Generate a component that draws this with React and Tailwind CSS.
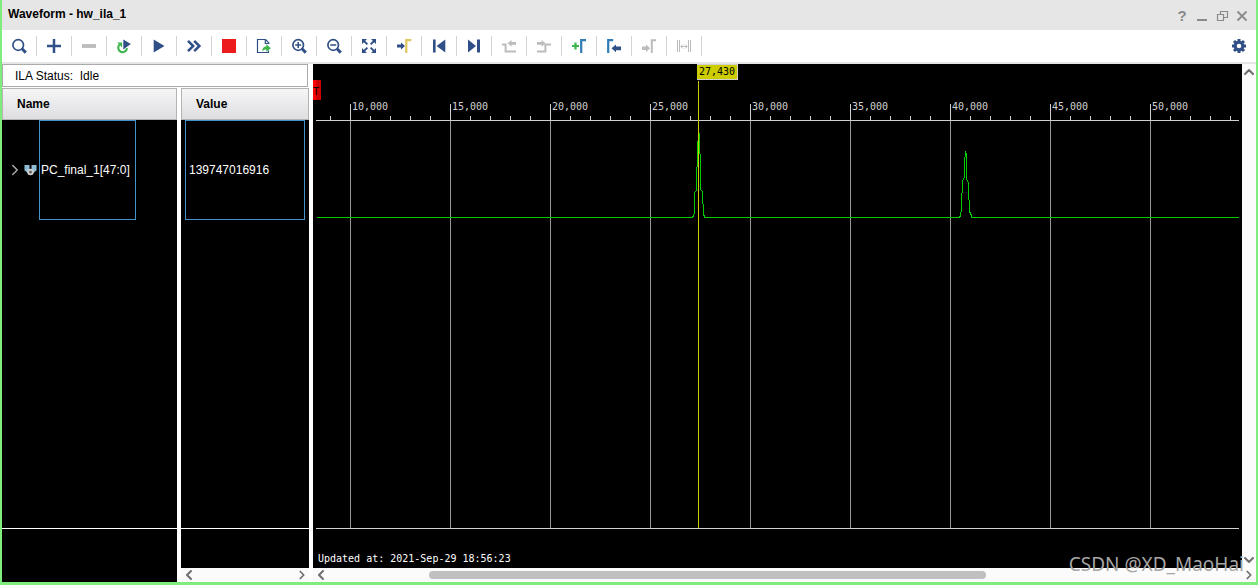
import { useLayoutEffect, useRef, useState } from 'react';
import clsx from 'clsx';
import { ChevronDown, ChevronLeft, ChevronRight, ChevronUp } from 'lucide-react';

const BLUE = '#2f4f86';
const SKY = '#2f7cb5';
const GREEN = '#3cb54a';
const GRAY = '#bcbcbc';

const TICK_STEP = 20;
const FIRST_TICK = 14;
const LABEL_WIDTH = 40;

// chart coordinates, origin is the top left of the plot
const TRACE = [
  [0, 153], [376, 153], [377, 151], [378, 148], [378, 128], [380, 126], [380, 103],
  [381, 102], [381, 77], [383, 76], [383, 68], [383, 89], [384, 90], [384, 125],
  [386, 127], [386, 139], [387, 140], [387, 149], [388, 153], [643, 153], [644, 151],
  [645, 144], [645, 129], [646, 128], [646, 117], [648, 112], [648, 93], [649, 92],
  [649, 87], [650, 91], [650, 115], [652, 118], [652, 135], [653, 136], [653, 147],
  [655, 151], [655, 153], [4000, 153],
];

function Icon({ children }) {
  return (
    <svg viewBox="0 0 16 16" className="w-4 h-4" fill="none" aria-hidden="true">
      {children}
    </svg>
  );
}

function Magnifier({ children }) {
  return (
    <Icon>
      <circle cx="7.2" cy="7" r="5.3" stroke={BLUE} strokeWidth="1.7" />
      <path d="M11 10.8l3.8 3.8" stroke={BLUE} strokeWidth="3" />
      {children}
    </Icon>
  );
}

const TOOLS = [
  { label: 'Search', icon: <Magnifier /> },
  { label: 'Add probes', icon: <Icon><path d="M1 8h14M8 1v14" stroke={BLUE} strokeWidth="2.5" /></Icon> },
  { label: 'Remove probes', disabled: true, icon: <Icon><path d="M1 8h14" stroke={GRAY} strokeWidth="3.8" /></Icon> },
  {
    label: 'Auto re-trigger',
    icon: (
      <Icon>
        <path d="M3.6 6.6A4.4 4.4 0 1 0 11 10.2" stroke={GREEN} strokeWidth="2.1" />
        <path d="M1.2 4.4h4.9v5z" fill={GREEN} />
        <path d="M7.3 1.4v10L14.8 6z" fill={BLUE} />
      </Icon>
    ),
  },
  { label: 'Run trigger', icon: <Icon><path d="M2.7 1.6v12.8L13.5 8z" fill={BLUE} /></Icon> },
  {
    label: 'Run trigger immediate',
    icon: <Icon><path d="M2 2.8L7.2 8 2 13.2M8.2 2.8L13.4 8l-5.2 5.2" stroke={BLUE} strokeWidth="2.5" /></Icon>,
  },
  { label: 'Stop trigger', icon: <Icon><path d="M1 1h14v14H1z" fill="#ed1c1c" /></Icon> },
  {
    label: 'Export data',
    icon: (
      <Icon>
        <path d="M13 5.2V6M9.5 1.5h-8v13h11v-2M9.5 1.5l3.5 3.6M9.3 1.5v4h3.9" stroke={BLUE} strokeWidth="1.2" />
        <path d="M6.3 13.6c0-3.6 1.4-5 4-5V6.3l4.6 3.9-4.6 3.6v-2.4c-2 0-3 .6-4 2.2z" fill={GREEN} />
      </Icon>
    ),
  },
  { label: 'Zoom in', icon: <Magnifier><path d="M4.2 7h6M7.2 4v6" stroke={BLUE} strokeWidth="1.5" /></Magnifier> },
  { label: 'Zoom out', icon: <Magnifier><path d="M4.2 7h6" stroke={BLUE} strokeWidth="1.5" /></Magnifier> },
  {
    label: 'Zoom fit',
    icon: (
      <Icon>
        <path d="M3 3l3.4 3.4M13 3L9.6 6.4M3 13l3.4-3.4M13 13L9.6 9.6" stroke={BLUE} strokeWidth="1.8" />
        <path d="M1 1h5L1 6zM15 1v5l-5-5zM1 15v-5l5 5zM15 15h-5l5-5z" fill={BLUE} />
      </Icon>
    ),
  },
  {
    label: 'Go to cursor',
    icon: (
      <Icon>
        <path d="M1 6.4h4V4.6L9 8 5 11.4V9.6H1z" fill={BLUE} />
        <path d="M10.3 15V2.2h5" stroke="#e0c75d" strokeWidth="2.2" />
      </Icon>
    ),
  },
  { label: 'Go to start', icon: <Icon><path d="M2 1.5h2.6v13H2zM14.3 1.5v13L5.6 8z" fill={BLUE} /></Icon> },
  { label: 'Go to end', icon: <Icon><path d="M2 1.5v13L10 8zM11 1.5h3v13h-3z" fill={BLUE} /></Icon> },
  {
    label: 'Previous transition',
    disabled: true,
    icon: (
      <Icon>
        <path d="M1 6.4h3.6v7H15" stroke={GRAY} strokeWidth="2" />
        <path d="M6.5 5.3L10.5 2v2H15v2.8h-4.5v1.9z" fill={GRAY} />
      </Icon>
    ),
  },
  {
    label: 'Next transition',
    disabled: true,
    icon: (
      <Icon>
        <path d="M1 13.4h8.4v-7H15" stroke={GRAY} strokeWidth="2" />
        <path d="M9.5 5.3L5.5 2v2H1v2.8h4.5v1.9z" fill={GRAY} />
      </Icon>
    ),
  },
  {
    label: 'Add marker',
    icon: (
      <Icon>
        <path d="M1 8h7M4.5 4.5v7" stroke={GREEN} strokeWidth="2.2" />
        <path d="M10.2 15V2.2H15" stroke={SKY} strokeWidth="2.2" />
      </Icon>
    ),
  },
  {
    label: 'Previous marker',
    icon: (
      <Icon>
        <path d="M2.2 15V2.2h5" stroke={SKY} strokeWidth="2.2" />
        <path d="M5.5 10.3L10 6.5v2h5v3.8h-5v2z" fill={BLUE} />
      </Icon>
    ),
  },
  {
    label: 'Next marker',
    disabled: true,
    icon: (
      <Icon>
        <path d="M1 8.6h4v-2l4 3.7-4 3.7v-2H1z" fill={GRAY} />
        <path d="M10.8 15V2.2H15" stroke={GRAY} strokeWidth="2" />
      </Icon>
    ),
  },
  {
    label: 'Swap cursors',
    disabled: true,
    icon: (
      <Icon>
        <path d="M1.5 2v12M3.5 2v12M12.5 2v12M14.5 2v12" stroke={GRAY} strokeWidth="1" />
        <path d="M5 8.5h6M6.8 6.5l-2 2 2 2M9.2 6.5l2 2-2 2" stroke={GRAY} strokeWidth="1" />
      </Icon>
    ),
  },
];

const WINDOW_BUTTONS = [
  { label: 'Help', icon: <span className="text-[15px] leading-4 font-bold">?</span> },
  { label: 'Minimize', icon: <Icon><path d="M3 12h10" stroke="currentColor" strokeWidth="2" /></Icon> },
  {
    label: 'Restore',
    icon: (
      <Icon>
        <path d="M6.5 6.5v-3h7v6h-4M3.5 6.5h6v6h-6z" stroke="currentColor" strokeWidth="1.2" />
      </Icon>
    ),
  },
  { label: 'Close', icon: <Icon><path d="M3.5 3.5l9 9M12.5 3.5l-9 9" stroke="currentColor" strokeWidth="1.8" /></Icon> },
];

function TitleBar() {
  return (
    <header className="flex h-[30px] shrink-0 justify-between bg-[#e6e6e6] px-1.5">
      <h1 className="text-xs leading-7 font-bold">Waveform - hw_ila_1</h1>
      <div className="flex items-center gap-1 pt-0.5 text-[#8a8a8a]">
        {WINDOW_BUTTONS.map(({ label, icon }) => (
          <button key={label} aria-label={label} className="flex w-4 h-4 items-center justify-center">
            {icon}
          </button>
        ))}
      </div>
    </header>
  );
}

function Toolbar() {
  return (
    <div className="flex h-[34px] shrink-0 items-center border-b-2 border-[#e6e6e6] bg-white pr-[9px]">
      {TOOLS.map(({ label, icon, disabled }) => (
        <button
          key={label}
          aria-label={label}
          disabled={disabled}
          className="flex w-[35px] h-5 items-center justify-center border-r border-[#d4d4d4]"
        >
          {icon}
        </button>
      ))}
      <button aria-label="Settings" className="ml-auto">
        <Icon>
          <path d="M8 1v14M1 8h14M3 3l10 10M13 3L3 13" stroke={BLUE} strokeWidth="3" />
          <circle cx="8" cy="8" r="3.8" fill="#fff" stroke={BLUE} strokeWidth="3" />
        </Icon>
      </button>
    </div>
  );
}

function HScroll({ children }) {
  return (
    <div className="flex h-3.5 shrink-0 items-center bg-[#fbfbfb] text-[#6e6e6e]">
      <button aria-label="Scroll left"><ChevronLeft className="w-4 h-4" strokeWidth={3} /></button>
      <div className="flex h-full flex-1">{children}</div>
      <button aria-label="Scroll right"><ChevronRight className="w-3.5 h-4" strokeWidth={3} /></button>
    </div>
  );
}

function Pane({ title, className, children, footer }) {
  return (
    <section className={clsx('flex flex-col bg-black text-white', className)}>
      <div className="flex-1">
        <table className="w-full border-separate border-spacing-0 text-xs">
          <thead>
            <tr>
              <th className="h-8 border border-[#b4b4b4] bg-linear-to-b from-[#f6f6f7] to-[#dedee1] p-0 pl-3.5 text-left font-bold text-black">
                {title}
              </th>
            </tr>
          </thead>
          <tbody>
            <tr>
              <td className="p-0">{children}</td>
            </tr>
          </tbody>
        </table>
      </div>
      <div className={clsx('shrink-0 border-t border-white', footer ? 'h-10' : 'h-[54px]')} />
      {footer}
    </section>
  );
}

function SignalPanes() {
  return (
    <div className="flex w-[307px] shrink-0 flex-col gap-px bg-white">
      <div className="mr-px h-[23px] border border-[#aaaaaa] pl-3 text-xs leading-[22px]">ILA Status:&nbsp; Idle</div>
      <div className="flex flex-1 gap-1">
        <Pane title="Name" className="w-[175px]">
          <div className="flex items-center pl-1">
            <button aria-label="Expand PC_final_1" className="text-[#a8a8a8]">
              <ChevronRight className="w-[18px] h-[18px]" strokeWidth={2} />
            </button>
            <svg viewBox="0 0 13 11" className="mr-0.5 w-[13px] h-[11px]" aria-hidden="true">
              <path d="M.5 0h5v4h2V0h5v5.5L9 8H4L.5 5.5z" fill="#8fbdd6" />
              <circle cx="6.5" cy="7" r="2.4" fill="#666" stroke="#cfcfcf" strokeWidth="1.8" />
            </svg>
            <div className="flex h-[100px] w-[97px] items-center border border-[#4292cc] pl-px">
              PC_final_1[47:0]
            </div>
          </div>
        </Pane>
        <Pane title="Value" className="flex-1" footer={<HScroll />}>
          <div className="mx-1 flex h-[100px] items-center border border-[#4292cc] pl-[3px]">
            139747016916
          </div>
        </Pane>
      </div>
    </div>
  );
}

function WaveChart() {
  const svgRef = useRef(null);
  const [width, setWidth] = useState(0);

  useLayoutEffect(() => {
    const measure = () => setWidth(svgRef.current.getBoundingClientRect().width);
    measure();
    window.addEventListener('resize', measure);
    return () => window.removeEventListener('resize', measure);
  }, []);

  const tickCount = Math.max(0, Math.ceil((width - FIRST_TICK) / TICK_STEP));
  const ticks = Array.from({ length: tickCount }, (_, i) => ({
    x: FIRST_TICK + i * TICK_STEP,
    value: 9000 + i * 1000,
    major: i % 5 === 1,
  }));

  return (
    <div className="min-w-0 flex-1 overflow-hidden bg-black px-[3px]">
      <svg
        ref={svgRef}
        className="block w-full h-full overflow-visible font-['DejaVu_Sans_Mono',monospace] text-[10px]"
        role="img"
        aria-label="PC_final_1 waveform"
      >
        {/* trigger marker */}
        <rect x="-3" y="16" width="8" height="20" fill="#cc0000" />
        <rect x="-3" y="16" width="3" height="20" fill="#ff0000" />
        <text x="-3" y="31" fill="#000">T</text>

        {/* time axis */}
        <g shapeRendering="crispEdges">
          {ticks.map(({ x, major }) =>
            major ? (
              <g key={x}>
                <rect x={x} y="40" width="1" height="16" fill="#d0d0d0" />
                <rect x={x} y="57" width="1" height="407" fill="#969696" />
              </g>
            ) : (
              <rect key={x} x={x} y="52" width="1" height="4" fill="#d0d0d0" />
            )
          )}
          <rect y="56" width="100%" height="1" fill="#d0d0d0" />
          <rect y="464" width="100%" height="1" fill="#d0d0d0" />
        </g>
        {ticks.filter((t) => t.major && t.x + LABEL_WIDTH < width).map(({ x, value }) => (
          <text key={x} x={x + 2} y="46" fill="#d0d0d0">
            {value.toLocaleString('en-US')}
          </text>
        ))}

        <svg width="100%" height="100%">
          <polyline
            points={TRACE.map(([x, y]) => `${x + 0.5},${y + 0.5}`).join(' ')}
            fill="none"
            stroke="#00cc00"
            shapeRendering="crispEdges"
          />
        </svg>

        {/* cursor */}
        <rect x="382" y="17" width="1" height="447" fill="#cccc00" />
        <rect x="381" y="0" width="41" height="16" fill="#d0d0d0" />
        <rect x="381" y="1" width="40" height="14" fill="#cccc00" />
        <text x="383" y="11" fill="#000">27,430</text>

        <text x="2" y="498" fill="#fff">Updated at: 2021-Sep-29 18:56:23</text>
      </svg>
    </div>
  );
}

function App() {
  return (
    <div className="relative flex h-screen flex-col overflow-hidden border-x-2 border-b-3 border-[#80ec7c] bg-white font-['Liberation_Sans',Arial,sans-serif] text-black">
      <TitleBar />
      <Toolbar />
      <main className="flex min-h-0 flex-1 gap-1">
        <SignalPanes />
        <div className="flex min-w-0 flex-1 flex-col">
          <div className="flex min-h-0 flex-1">
            <WaveChart />
            <div className="flex w-3.5 shrink-0 flex-col items-center justify-between bg-[#fbfbfb] text-[#6e6e6e]">
              <button aria-label="Scroll up"><ChevronUp className="w-4 h-4" strokeWidth={3} /></button>
              <button aria-label="Scroll down"><ChevronDown className="w-4 h-4" strokeWidth={3} /></button>
            </div>
          </div>
          <HScroll>
            <div className="ml-[11%] mt-[3px] h-2 w-[61%] rounded-full bg-[#c0c0c0]" />
          </HScroll>
        </div>
      </main>
      <div className="pointer-events-none absolute right-3 bottom-1 font-['Noto_Sans',sans-serif] text-[19px] leading-7 text-[#a6a6a6]">
        CSDN @XD_MaoHai
      </div>
    </div>
  );
}

export default App;
